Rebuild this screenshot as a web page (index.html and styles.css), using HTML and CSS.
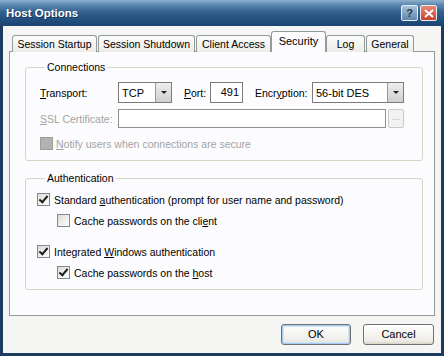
FILE: index.html
```html
<!DOCTYPE html>
<html lang="en">
<head>
    <meta charset="UTF-8">
    <title>Host Options</title>
    <link rel="stylesheet" href="styles.css">
</head>
<body>
    <div class="window">
        <div class="titlebar">
            <span class="title">Host Options</span>
            <div class="title-btns">
                <span class="tbtn help">?</span>
                <span class="tbtn close">
                    <svg width="10" height="9" viewBox="0 0 10 9"><path d="M1 1 L9 8 M9 1 L1 8" stroke="#fff" stroke-width="2" fill="none"/></svg>
                </span>
            </div>
        </div>

        <div class="client">
            <div class="tabs">
                <span class="tab t-startup">Session Startup</span>
                <span class="tab t-shutdown">Session Shutdown</span>
                <span class="tab t-client">Client Access</span>
                <span class="tab t-security active">Security</span>
                <span class="tab t-log">Log</span>
                <span class="tab t-general">General</span>
            </div>

            <div class="panel">
                <fieldset class="group conn">
                    <legend>Connections</legend>
                    <div class="row first">
                        <span class="lbl"><u>T</u>ransport:</span>
                        <span class="combo tcp"><span class="val">TCP</span><span class="drop"></span></span>
                        <span class="lbl port-lbl"><u>P</u>ort:</span>
                        <span class="field port">491</span>
                        <span class="lbl enc-lbl">Encr<u>y</u>ption:</span>
                        <span class="combo enc"><span class="val">56-bit DES</span><span class="drop"></span></span>
                    </div>
                    <div class="row ssl">
                        <span class="lbl disabled"><u>S</u>SL Certificate:</span>
                        <span class="field cert"></span>
                        <span class="browse">...</span>
                    </div>
                    <div class="check notify disabled">
                        <span class="box off"></span>
                        <span><u>N</u>otify users when connections are secure</span>
                    </div>
                </fieldset>

                <fieldset class="group auth">
                    <legend>Authentication</legend>
                    <div class="check c1">
                        <span class="box on"></span>
                        <span>Standard <u>a</u>uthentication (prompt for user name and password)</span>
                    </div>
                    <div class="check c2 sub">
                        <span class="box"></span>
                        <span>Cache passwords on the cli<u>e</u>nt</span>
                    </div>
                    <div class="check c3">
                        <span class="box on"></span>
                        <span>Integrated <u>W</u>indows authentication</span>
                    </div>
                    <div class="check c4 sub">
                        <span class="box on"></span>
                        <span>Cache passwords on the <u>h</u>ost</span>
                    </div>
                </fieldset>
            </div>

            <div class="buttons">
                <span class="btn default">OK</span>
                <span class="btn">Cancel</span>
            </div>
        </div>
    </div>
</body>
</html>
```

FILE: styles.css
```css
body {
    margin: 0;
    padding: 0;
    font-family: 'Liberation Sans', Arial, sans-serif;
    font-size: 10.5px;
    color: #000;
    background: #1b3b5f;
    overflow: hidden;
}

.window {
    width: 444px;
    height: 356px;
    display: flex;
    flex-direction: column;
}

.titlebar {
    height: 26px;
    flex: none;
    display: flex;
    align-items: center;
    justify-content: space-between;
    padding: 0 6px;
    background: linear-gradient(#8fb0cd 0%, #5d89b1 18%, #33628f 45%, #23507e 75%, #1a4471 100%);
}

.title {
    color: #fff;
    font-weight: bold;
    font-size: 11.5px;
    text-shadow: 1px 1px 0 #1a3456;
}

.title-btns {
    display: flex;
    gap: 2px;
    margin-right: 1px;
}

.tbtn {
    width: 15px;
    height: 14px;
    border: 1px solid #e8eef4;
    border-radius: 2px;
    display: flex;
    align-items: center;
    justify-content: center;
    color: #fff;
    font-weight: bold;
    font-size: 11px;
}

.help {
    background: linear-gradient(#a9c2da, #5f88ae);
    color: #334;
}

.close {
    background: linear-gradient(#e88a78, #c9402c);
}

.client {
    flex: 1;
    margin: 0 3px 3px;
    background: #f5f5f4;
    display: flex;
    flex-direction: column;
}

.tabs {
    display: flex;
    align-items: flex-end;
    height: 20px;
    margin-top: 6px;
    padding-left: 9px;
    position: relative;
    z-index: 1;
}

.tab {
    flex: none;
    box-sizing: border-box;
    height: 17px;
    line-height: 16px;
    margin-right: 1px;
    border: 1px solid #919b9c;
    border-bottom: none;
    border-radius: 3px 3px 0 0;
    background: linear-gradient(#fdfdfd, #ecebe6);
    font-size: 10.5px;
    text-align: center;
    white-space: nowrap;
}

.t-startup { width: 85px; }
.t-shutdown { width: 97px; }
.t-client { width: 75px; }
.t-security { width: 55px; }
.t-log { width: 39px; }
.t-general { width: 48px; }

.tab.active {
    height: 21px;
    line-height: 18px;
    font-size: 11px;
    background: #fcfcfe;
    margin: 0 0 0 -1px;
}

.panel {
    height: 263px;
    margin: 0 6px;
    border: 1px solid #919b9c;
    background: #fcfcfe;
    padding: 0 11px 0 15px;
    margin-top: -1px;
}

.group {
    border: 1px solid #d5d5c8;
    border-radius: 3px;
    margin: 9px 0 0;
    padding: 0 0 10px 14px;
}

.group legend {
    padding: 0 2px;
    margin-left: 5px;
    line-height: 13px;
}

.row {
    display: flex;
    align-items: center;
}

.row.first {
    margin-top: 8px;
    height: 21px;
}

.row.ssl {
    margin-top: 6px;
    height: 19px;
}

.lbl {
    width: 78px;
    flex: none;
}

.port-lbl {
    width: 26px;
    margin-left: 12px;
}

.enc-lbl {
    width: 57px;
    margin-left: 12px;
}

.disabled {
    color: #a3a3a3;
}

.combo {
    height: 21px;
    box-sizing: border-box;
    border: 1px solid #7b7b7b;
    background: #fff;
    display: flex;
    align-items: center;
    font-size: 11px;
}

.combo .val {
    flex: 1;
    padding-left: 3px;
}

.combo .drop {
    width: 16px;
    height: 19px;
    box-sizing: border-box;
    border-left: 1px solid #9a9a9a;
    background: linear-gradient(#eeeeee, #cfcfcf);
    position: relative;
}

.combo .drop::after {
    content: "";
    position: absolute;
    left: 5px;
    top: 8px;
    border-left: 3px solid transparent;
    border-right: 3px solid transparent;
    border-top: 3px solid #222;
}

.tcp {
    width: 54px;
}

.enc {
    width: 92px;
}

.field {
    box-sizing: border-box;
    border: 1px solid #7b7b7b;
    background: #fff;
}

.port {
    width: 33px;
    height: 21px;
    line-height: 19px;
    text-align: right;
    padding-right: 3px;
    font-size: 11px;
}

.cert {
    width: 268px;
    height: 19px;
    border-color: #8f8f8f;
}

.browse {
    width: 16px;
    height: 19px;
    box-sizing: border-box;
    margin-left: 2px;
    border: 1px solid #c9c9c9;
    border-radius: 2px;
    background: #f2f2f2;
    color: #aaa;
    font-size: 9px;
    text-align: center;
    line-height: 15px;
}

.check {
    display: flex;
    align-items: center;
    height: 13px;
    gap: 4px;
    white-space: nowrap;
}

.check.notify {
    margin-top: 9px;
    gap: 3px;
}

.box {
    width: 13px;
    height: 13px;
    box-sizing: border-box;
    border: 1px solid #7f8a97;
    background: linear-gradient(135deg, #dcdcd6, #ffffff);
    flex: none;
    position: relative;
}

.box.off {
    background: #b2b2b2;
    border-color: #9c9c9c;
}

.box.on::after {
    content: "";
    position: absolute;
    left: 3px;
    top: 0px;
    width: 3px;
    height: 7px;
    border-right: 2px solid #1e1e1e;
    border-bottom: 2px solid #1e1e1e;
    transform: rotate(40deg);
}

.auth {
    margin-top: 11px;
}

.auth .check {
    margin-left: -3px;
}

.check.c1 {
    margin-top: 8px;
}

.check.c2 {
    margin-top: 8px;
}

.check.c3 {
    margin-top: 18px;
}

.check.c4 {
    margin-top: 8px;
}

.check.sub {
    margin-left: 17px;
}

.buttons {
    display: flex;
    justify-content: flex-end;
    gap: 12px;
    margin-top: 8px;
    padding-right: 7px;
}

.btn {
    width: 71px;
    height: 21px;
    box-sizing: border-box;
    border: 1px solid #707070;
    border-radius: 3px;
    background: linear-gradient(#ffffff, #ecebe6 85%, #d6d0c5);
    text-align: center;
    line-height: 19px;
    font-size: 11px;
}

.btn.default {
    width: 70px;
    box-shadow: inset 0 0 0 1px #a8cbee, inset 0 0 0 2px #cfe3f7;
}
```
